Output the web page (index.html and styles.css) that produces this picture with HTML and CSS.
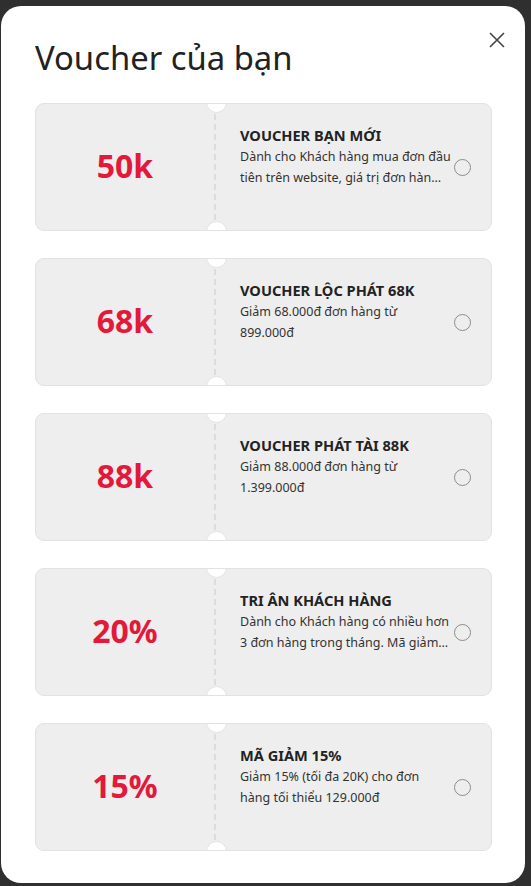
FILE: index.html
```html
<!DOCTYPE html>
<html lang="vi">
<head>
<meta charset="utf-8">
<title>Voucher của bạn</title>
<link rel="stylesheet" href="styles.css">
</head>
<body>
<div class="modal">
  <button class="close" aria-label="Đóng">
    <svg width="18" height="18" viewBox="0 0 18 18"><path d="M2 2L16 16M16 2L2 16" stroke="#444" stroke-width="1.6" fill="none"/></svg>
  </button>
  <h1 class="title">Voucher của bạn</h1>
  <div class="list">
    <div class="card">
      <div class="value">50k</div>
      <div class="info">
        <div class="name">VOUCHER BẠN MỚI</div>
        <div class="desc">Dành cho Khách hàng mua đơn đầu<br>tiên trên website, giá trị đơn hàn…</div>
      </div>
      <span class="radio"></span>
    </div>
    <div class="card">
      <div class="value">68k</div>
      <div class="info">
        <div class="name">VOUCHER LỘC PHÁT 68K</div>
        <div class="desc">Giảm 68.000đ đơn hàng từ<br>899.000đ</div>
      </div>
      <span class="radio"></span>
    </div>
    <div class="card">
      <div class="value">88k</div>
      <div class="info">
        <div class="name">VOUCHER PHÁT TÀI 88K</div>
        <div class="desc">Giảm 88.000đ đơn hàng từ<br>1.399.000đ</div>
      </div>
      <span class="radio"></span>
    </div>
    <div class="card">
      <div class="value">20%</div>
      <div class="info">
        <div class="name">TRI ÂN KHÁCH HÀNG</div>
        <div class="desc">Dành cho Khách hàng có nhiều hơn<br>3 đơn hàng trong tháng. Mã giảm…</div>
      </div>
      <span class="radio"></span>
    </div>
    <div class="card">
      <div class="value">15%</div>
      <div class="info">
        <div class="name">MÃ GIẢM 15%</div>
        <div class="desc">Giảm 15% (tối đa 20K) cho đơn<br>hàng tối thiểu 129.000đ</div>
      </div>
      <span class="radio"></span>
    </div>
  </div>
</div>
</body>
</html>
```
FILE: styles.css
```css
html, body {
  margin: 0;
  padding: 0;
  background: #2f2f2f;
}
body {
  width: 531px;
  height: 886px;
  overflow: hidden;
  font-family: "Noto Sans", "Open Sans", sans-serif;
  color: #222;
}
.modal {
  position: relative;
  box-sizing: border-box;
  margin: 6px 0 0 1px;
  width: 524px;
  height: 877px;
  background: #fff;
  border-radius: 20px;
  padding: 32px 33px 0 34px;
}
.close {
  position: absolute;
  top: 25px;
  right: 19px;
  width: 18px;
  height: 18px;
  padding: 0;
  border: 0;
  background: none;
  display: flex;
}
.title {
  margin: 0;
  font-size: 32.8px;
  font-weight: 400;
  line-height: 40px;
  color: #222;
}
.list {
  margin-top: 25px;
  display: flex;
  flex-direction: column;
  gap: 27px;
}
.card {
  position: relative;
  box-sizing: border-box;
  height: 128px;
  background: #eeeeee;
  border: 1px solid #e2e2e2;
  border-radius: 9px;
  display: grid;
  grid-template-columns: 180px 1fr 40px;
  overflow: hidden;
}
.card::before,
.card::after {
  content: "";
  position: absolute;
  left: 170px;
  width: 19px;
  height: 19px;
  border-radius: 50%;
  background: #fff;
  border: 1px solid #e2e2e2;
}
.card::before { top: -12px; }
.card::after { bottom: -12px; }
.value {
  display: flex;
  align-items: center;
  justify-content: center;
  font-weight: 700;
  font-size: 32px;
  color: #e3193b;
  padding-bottom: 4px;
  border-right: 2px dashed #dcdcdc;
}
.info {
  padding: 20px 0 0 24px;
  min-width: 0;
}
.name {
  font-size: 14.6px;
  font-weight: 700;
  line-height: 22px;
  white-space: nowrap;
  color: #222;
}
.desc {
  font-size: 12.5px;
  line-height: 21px;
  color: #333;
  white-space: nowrap;
}
.radio {
  align-self: center;
  justify-self: start;
  margin-left: 3px;
  width: 15px;
  height: 15px;
  border: 1px solid #8c8c8c;
  border-radius: 50%;
  background: #eeeeee;
}
```
